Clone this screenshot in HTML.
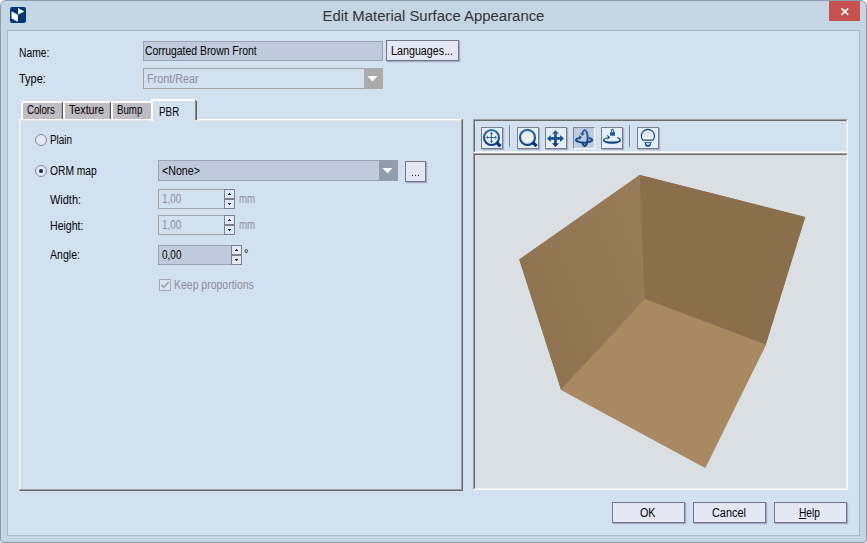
<!DOCTYPE html>
<html>
<head>
<meta charset="utf-8">
<title>Edit Material Surface Appearance</title>
<style>
*{box-sizing:border-box;margin:0;padding:0}
html,body{width:867px;height:543px;overflow:hidden;background:#fff}
body{font-family:"Liberation Sans",sans-serif;font-size:12.5px;color:#000;position:relative}
.abs,.t,.btn,.tb,.fld,.sp{position:absolute}
#win{left:0;top:0;width:867px;height:543px;background:#c4d5e4;border:1px solid #8b9dae;border-radius:6px 6px 3px 3px}
#client{left:7px;top:30px;width:853px;height:506px;background:#d2e1f0;border:1px solid #a7b8c8}
#title{left:0;top:4px;width:867px;text-align:center;font-size:15.5px;line-height:24px;color:#333;white-space:nowrap}
#close{left:829px;top:1px;width:31px;height:20px;background:#c75050}
.t{white-space:nowrap;line-height:14px;height:14px;transform-origin:0 0}
.g{color:#8c8c9c}
.btn{background:#e3e8f4;border:1px solid #76768a;box-shadow:1px 1px 1px rgba(120,125,155,.55)}
.fld{border:1px solid #97a2b2;background:#bfcbdc}
.fld.dis{background:#d2e1f0;border-color:#a3a3a3}
.sp{width:11px;height:10px;background:#e3eaf5;border:1px solid #7e7e90}
.sp i{position:absolute;left:4px;width:1px;height:1px;background:#0c1a44}
.sp i.u{top:3px;box-shadow:-1px 1px 0 #0c1a44,0 1px 0 #0c1a44,1px 1px 0 #0c1a44}
.sp i.d{top:4px;box-shadow:-1px -1px 0 #0c1a44,0 -1px 0 #0c1a44,1px -1px 0 #0c1a44}
.tab{position:absolute;top:101px;height:18px;background:#c0bcc4;border-left:2px solid #fff;border-top:2px solid #fff;border-right:1px solid #555;box-shadow:inset -1px 0 0 #aaa6ae}
.tb{top:127px;width:22px;height:22px;background:#e6eef5;border:1px solid #7b7b8e;box-shadow:1px 1px 1px rgba(120,125,155,.5)}
.tb svg{position:absolute;left:-1px;top:-1px}
</style>
</head>
<body>
<div id="win" class="abs"></div>
<div id="client" class="abs"></div>

<!-- title bar -->
<svg class="abs" style="left:10px;top:7px" width="16" height="16" viewBox="0 0 16 16">
  <rect x="0" y="0" width="16" height="16" rx="2.2" fill="#003576"/>
  <polygon points="8.05,0.9 14.3,4.4 8.05,7.4" fill="#fff"/>
  <polygon points="1.5,4.3 7.85,7.85 7.85,14.8 1.5,11.5" fill="#fff"/>
</svg>
<div id="title" class="abs"><span id="ttl" style="display:inline-block;transform:scaleX(0.961)">Edit Material Surface Appearance</span></div>
<div id="close" class="abs">
  <svg class="abs" style="left:0;top:0" width="31" height="20" viewBox="0 0 31 20">
    <path d="M12.5 7.3 L19.2 13.8 M19.2 7.3 L12.5 13.8" stroke="#fff" stroke-width="1.7" fill="none"/>
  </svg>
</div>

<!-- name / type rows -->
<span class="t" id="t_name" style="left:19px;top:46px;transform:scaleX(0.8250)">Name:</span>
<span class="t" id="t_type" style="left:19px;top:72px;transform:scaleX(0.88)">Type:</span>
<div class="fld" style="left:143px;top:41px;width:240px;height:20px"></div>
<span class="t" id="t_corr" style="left:145px;top:44px;transform:scaleX(0.8325)">Corrugated Brown Front</span>
<div class="btn" style="left:386px;top:40px;width:73px;height:21px"></div>
<span class="t" id="t_lang" style="left:391px;top:44px;transform:scaleX(0.8589)">Languages...</span>
<div class="fld dis" style="left:143px;top:68px;width:240px;height:21px"></div>
<div class="abs" style="left:364px;top:68px;width:19px;height:21px;background:#ababab"></div>
<svg class="abs" style="left:364px;top:69px" width="18" height="19"><polygon points="3.5,7 13.5,7 8.5,12.5" fill="#fff"/></svg>
<span class="t g" id="t_fr" style="left:147px;top:72px;transform:scaleX(0.8624)">Front/Rear</span>

<!-- tab page -->
<div class="abs" id="page" style="left:19px;top:119px;width:444px;height:372px;border-left:1px solid #fff;border-top:1px solid #fff;border-right:2px solid #696969;border-bottom:2px solid #696969;box-shadow:inset 1px 1px 0 #e9e7e4"></div>
<div class="abs" style="left:461px;top:120px;width:1px;height:370px;background:#a0a0a0"></div>
<div class="abs" style="left:20px;top:489px;width:442px;height:1px;background:#a0a0a0"></div>

<div class="tab" style="left:21px;width:42px"></div>
<div class="tab" style="left:63px;width:48px"></div>
<div class="tab" style="left:111px;width:41px;border-right:none;box-shadow:none"></div>
<div class="abs" id="seltab" style="left:151px;top:99px;width:44px;height:22px;background:#d2e1f0;border-left:2px solid #fff;border-top:2px solid #fff"></div>
<div class="abs" style="left:195px;top:100px;width:1px;height:20px;background:#8c8c8c"></div>
<div class="abs" style="left:196px;top:101px;width:1px;height:19px;background:#606060"></div>
<span class="t" id="t_colors" style="left:27px;top:103px;transform:scaleX(0.7726)">Colors</span>
<span class="t" id="t_texture" style="left:69px;top:103px;transform:scaleX(0.8554)">Texture</span>
<span class="t" id="t_bump" style="left:117px;top:103px;transform:scaleX(0.7735)">Bump</span>
<span class="t" id="t_pbr" style="left:159px;top:105px;transform:scaleX(0.7885)">PBR</span>

<!-- tab content -->
<svg class="abs" style="left:34px;top:133px" width="14" height="14"><circle cx="7" cy="7" r="5.5" fill="#e3e8f4" stroke="#85859a" stroke-width="1"/></svg>
<span class="t" id="t_plain" style="left:50px;top:133px;transform:scaleX(0.7938)">Plain</span>
<svg class="abs" style="left:34px;top:164px" width="14" height="14"><circle cx="7" cy="7" r="5.5" fill="#e3e8f4" stroke="#85859a" stroke-width="1"/><circle cx="7" cy="7" r="2.05" fill="#0a2c5c"/></svg>
<span class="t" id="t_orm" style="left:50px;top:164px;transform:scaleX(0.82)">ORM map</span>

<div class="fld" style="left:158px;top:160px;width:240px;height:21px"></div>
<div class="abs" style="left:379px;top:160px;width:19px;height:21px;background:#929dab"></div>
<svg class="abs" style="left:379px;top:160px" width="19" height="21"><polygon points="3.5,8 13.5,8 8.5,13.5" fill="#fff"/></svg>
<span class="t" id="t_none" style="left:162px;top:164px;transform:scaleX(0.8536)">&lt;None&gt;</span>
<div class="btn" style="left:405px;top:161px;width:21px;height:21px"></div>
<div class="abs" style="left:412px;top:175px;width:1px;height:1px;background:#1c1c50;box-shadow:3px 0 0 #1c1c50,6px 0 0 #1c1c50"></div>

<span class="t" id="t_width" style="left:50px;top:193px;transform:scaleX(0.8756)">Width:</span>
<div class="fld dis" style="left:158px;top:189px;width:67px;height:20px"></div>
<div class="sp" style="left:224px;top:189px"><i class="u"></i></div>
<div class="sp" style="left:224px;top:199px"><i class="d"></i></div>
<span class="t g" id="t_w100" style="left:162px;top:192px;transform:scaleX(0.795)">1,00</span>
<span class="t g" id="t_mm1" style="left:239px;top:192px;transform:scaleX(0.7700)">mm</span>

<span class="t" id="t_height" style="left:50px;top:219px;transform:scaleX(0.845)">Height:</span>
<div class="fld dis" style="left:158px;top:215px;width:67px;height:20px"></div>
<div class="sp" style="left:224px;top:215px"><i class="u"></i></div>
<div class="sp" style="left:224px;top:225px"><i class="d"></i></div>
<span class="t g" id="t_h100" style="left:162px;top:218px;transform:scaleX(0.795)">1,00</span>
<span class="t g" id="t_mm2" style="left:239px;top:218px;transform:scaleX(0.7700)">mm</span>

<span class="t" id="t_angle" style="left:50px;top:248px;transform:scaleX(0.8448)">Angle:</span>
<div class="fld" style="left:158px;top:245px;width:74px;height:20px"></div>
<div class="sp" style="left:231px;top:245px"><i class="u"></i></div>
<div class="sp" style="left:231px;top:255px"><i class="d"></i></div>
<span class="t" id="t_a000" style="left:162px;top:248px;transform:scaleX(0.8)">0,00</span>
<span class="t" id="t_deg" style="left:244px;top:247px;transform:scaleX(0.88)">°</span>

<svg class="abs" style="left:159px;top:279px" width="12" height="12"><rect x="0.5" y="0.5" width="11" height="11" fill="#d8e4f1" stroke="#a6a6b2"/><path d="M2.4 5.8 L4.8 8.4 L9.6 3" stroke="#a4a4ae" stroke-width="1.7" fill="none"/></svg>
<span class="t g" id="t_keep" style="left:174px;top:278px;transform:scaleX(0.8378)">Keep proportions</span>

<!-- toolbar panel -->
<div class="abs" style="left:473px;top:119px;width:375px;height:34px;border-left:1px solid #a0a0a0;border-top:1px solid #a0a0a0;border-right:1px solid #fff;border-bottom:1px solid #fff"></div>
<div class="abs" style="left:474px;top:120px;width:373px;height:32px;border-left:1px solid #696969;border-top:1px solid #696969;border-right:1px solid #dce6f0;border-bottom:1px solid #eef2f6"></div>
<!-- preview panel -->
<div class="abs" style="left:473px;top:153px;width:375px;height:337px;background:#d9dfe3;border-left:1px solid #a0a0a0;border-top:1px solid #a0a0a0;border-right:1px solid #fff;border-bottom:1px solid #fff"></div>
<div class="abs" style="left:474px;top:154px;width:373px;height:335px;border-left:1px solid #696969;border-top:1px solid #696969;border-right:1px solid #e2e8ee;border-bottom:1px solid #eef1f4"></div>

<svg class="abs" style="left:475px;top:155px" width="371" height="333" viewBox="475 155 371 333">
  <defs>
    <linearGradient id="lw" gradientUnits="userSpaceOnUse" x1="519" y1="300" x2="645" y2="250">
      <stop offset="0" stop-color="#8f7350"/><stop offset="1" stop-color="#987b59"/>
    </linearGradient>
  </defs>
  <polygon points="639.8,175 805.2,217 765.8,344.4 705.1,467.5 561,389.5 519.3,259.5" fill="#8b6f4d"/>
  <polygon points="644.8,298.8 765.8,344.4 705.1,467.5 561,389.5" fill="#a98962" stroke="#a98962" stroke-width="0.8" stroke-linejoin="round"/>
  <polygon points="639.8,175 644.8,298.8 561,389.5 519.3,259.5" fill="url(#lw)"/>
  <polygon points="639.8,175 805.2,217 765.8,344.4 644.8,298.8" fill="#8b6f4d"/>
</svg>

<!-- toolbar buttons -->
<div class="tb" style="left:481px"></div>
<div class="tb" style="left:517px"></div>
<div class="tb" style="left:545px"></div>
<div class="tb" id="tbsel" style="left:573px;background:#bfcbdc;border-color:#85859a #fff #fff #85859a;box-shadow:none"></div>
<div class="tb" style="left:601px"></div>
<div class="tb" style="left:637px"></div>
<div class="abs" style="left:509px;top:125px;width:1px;height:22px;background:#6683a8"></div>
<div class="abs" style="left:510px;top:125px;width:1px;height:22px;background:#e2ebf5"></div>
<div class="abs" style="left:629px;top:125px;width:1px;height:22px;background:#6683a8"></div>
<div class="abs" style="left:630px;top:125px;width:1px;height:22px;background:#e2ebf5"></div>

<svg class="abs" style="left:481px;top:127px" width="180" height="22" viewBox="0 0 180 22">
  <defs>
    <linearGradient id="bg2" gradientUnits="userSpaceOnUse" x1="0" y1="2" x2="0" y2="20"><stop offset="0" stop-color="#2d6cb6"/><stop offset="1" stop-color="#07377e"/></linearGradient>
    <linearGradient id="bulb" x1="0" y1="0" x2="0" y2="1"><stop offset="0" stop-color="#d6d7ec"/><stop offset="1" stop-color="#fafaff"/></linearGradient>
  </defs>
  <!-- 1: zoom extents -->
  <g>
    <circle cx="10.5" cy="10.5" r="7.5" fill="#eaf1f7" stroke="url(#bg2)" stroke-width="2.1"/>
    <path d="M15.7 15.5 L19.5 19.3" stroke="#06357c" stroke-width="3.3" fill="none"/>
    <path d="M10.45 6 V15 M6 10.45 H15" stroke="#2e6cb8" stroke-width="1.1" fill="none"/>
    <path d="M10.45 4.7 L12.1 7 H8.8 Z M10.45 16.2 L12.1 13.9 H8.8 Z M4.7 10.45 L7 8.8 V12.1 Z M16.2 10.45 L13.9 8.8 V12.1 Z" fill="#2e6cb8"/>
  </g>
  <!-- 2: zoom -->
  <g transform="translate(36,0)">
    <circle cx="10.5" cy="10.4" r="7.5" fill="#eaf1f7" stroke="url(#bg2)" stroke-width="2.1"/>
    <path d="M15.7 15.4 L19.5 19.2" stroke="#06357c" stroke-width="3.3" fill="none"/>
  </g>
  <!-- 3: pan -->
  <g transform="translate(64,0)">
    <path d="M10.45 2.9 L14 6.7 H11.8 V10.1 H15.05 V7.9 L19 11.4 L15.05 15 V12.75 H11.8 V16.2 H14 L10.45 20 L6.95 16.2 H9.1 V12.75 H5.85 V15 L1.95 11.4 L5.85 7.9 V10.1 H9.1 V6.7 H6.95 Z" fill="url(#bg2)"/>
  </g>
  <!-- 4: rotate 3d -->
  <g transform="translate(92,0)">
    <path d="M6.3 11 A8.1 2.45 0 1 0 15.8 11" fill="none" stroke="url(#bg2)" stroke-width="2"/>
    <path d="M9.3 6.3 A3 7.9 0 1 1 9.1 14.9" fill="none" stroke="url(#bg2)" stroke-width="2"/>
    <path d="M7 6.1 L11.7 6.3 L9.4 9 Z" fill="#1b56a4"/>
    <path d="M6.1 8 L8.9 10.4 L6.2 12.7 Z" fill="#134b98"/>
  </g>
  <!-- 5: rotate lock -->
  <g transform="translate(120,0)">
    <path d="M6.6 10.3 C3.6 10.9 2 12 2 13.2 C2 15.2 6 16.8 11 16.8 C16 16.8 20 15.2 20 13.2 C20 11.9 18.6 10.8 16.3 10.1 L15.9 11 C17.4 11.5 18.4 12.2 18.4 12.9 C18.4 13.9 15.2 14.5 11 14.5 C6.8 14.5 3.7 13.8 3.7 12.9 C3.7 12.2 4.9 11.6 7 11.3 Z" fill="url(#bg2)"/>
    <path d="M5.8 7.8 L9.2 10.3 L6 13 L7 10.4 Z" fill="#0a3c88"/>
    <rect x="9.1" y="5.1" width="4.9" height="3.6" fill="#1c5aa8"/>
    <path d="M10.55 5.4 V2.5 H12.5 V5.4" fill="none" stroke="#1c5aa8" stroke-width="0.95"/>
  </g>
  <!-- 6: bulb -->
  <g transform="translate(156,0)">
    <path d="M5.8 13.05 A6.55 6.55 0 1 1 16 13.05 Z" fill="url(#bulb)" stroke="#0d4490" stroke-width="1.15"/>
    <path d="M7.2 15.2 H14.8 V15.9 H13.9 V17.4 C13.9 18.6 12.4 19.8 10.9 19.8 C9.4 19.8 8 18.6 8 17.4 V15.9 H7.2 Z" fill="#0d4490"/>
    <path d="M9.1 16.1 H12.9 V17.2 C12.9 17.7 12 18 10.9 18 C9.9 18 9.1 17.7 9.1 17.2 Z" fill="#a6dcf2"/>
  </g>
</svg>

<!-- bottom buttons -->
<div class="btn" style="left:612px;top:502px;width:73px;height:21px"></div>
<div class="btn" style="left:693px;top:502px;width:73px;height:21px"></div>
<div class="btn" style="left:774px;top:502px;width:73px;height:21px"></div>
<span class="t" id="t_ok" style="left:640px;top:506px;transform:scaleX(0.8580)">OK</span>
<span class="t" id="t_cancel" style="left:712px;top:506px;transform:scaleX(0.8712)">Cancel</span>
<span class="t" id="t_help" style="left:799px;top:506px;transform:scaleX(0.8131)"><span style="text-decoration:underline">H</span>elp</span>
</body>
</html>
